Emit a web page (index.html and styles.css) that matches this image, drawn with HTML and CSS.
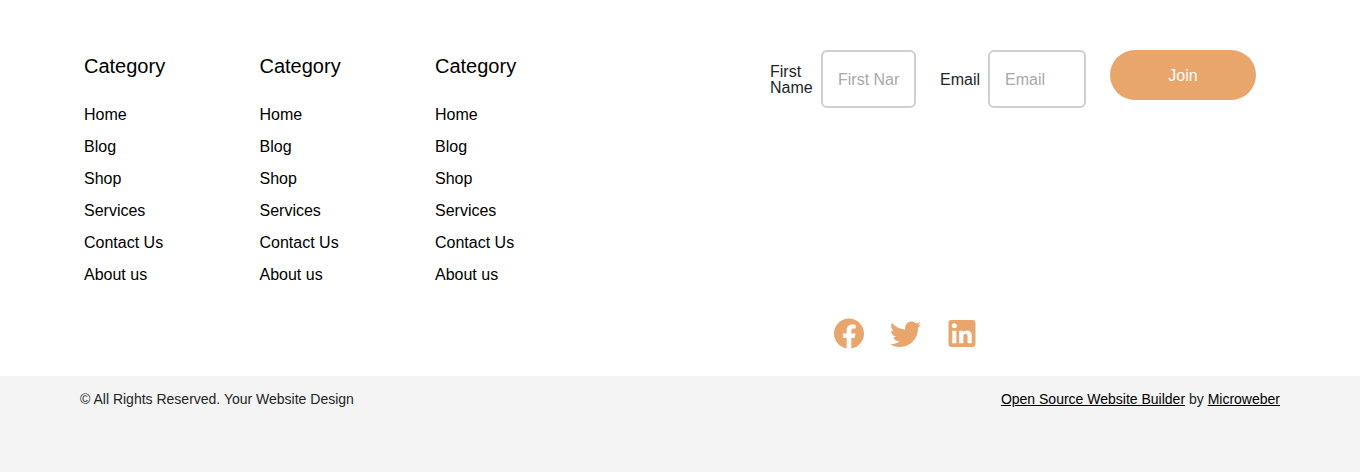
FILE: index.html
```html
<!DOCTYPE html>
<html lang="en">
<head>
<meta charset="utf-8">
<title>Your Website Design</title>
<link rel="stylesheet" href="styles.css">
</head>
<body>
<footer>
  <div class="main">
    <nav class="menus">
      <div class="menu">
        <h2>Category</h2>
        <ul>
          <li><a href="#">Home</a></li>
          <li><a href="#">Blog</a></li>
          <li><a href="#">Shop</a></li>
          <li><a href="#">Services</a></li>
          <li><a href="#">Contact Us</a></li>
          <li><a href="#">About us</a></li>
        </ul>
      </div>
      <div class="menu">
        <h2>Category</h2>
        <ul>
          <li><a href="#">Home</a></li>
          <li><a href="#">Blog</a></li>
          <li><a href="#">Shop</a></li>
          <li><a href="#">Services</a></li>
          <li><a href="#">Contact Us</a></li>
          <li><a href="#">About us</a></li>
        </ul>
      </div>
      <div class="menu">
        <h2>Category</h2>
        <ul>
          <li><a href="#">Home</a></li>
          <li><a href="#">Blog</a></li>
          <li><a href="#">Shop</a></li>
          <li><a href="#">Services</a></li>
          <li><a href="#">Contact Us</a></li>
          <li><a href="#">About us</a></li>
        </ul>
      </div>
    </nav>
    <div class="side">
      <form class="join">
        <div class="field field-name">
          <label for="first-name">First Name</label>
          <input id="first-name" type="text" placeholder="First Name">
        </div>
        <div class="field field-email">
          <label for="email">Email</label>
          <input id="email" type="email" placeholder="Email">
        </div>
        <button type="button">Join</button>
      </form>
      <div class="social">
        <a href="#" aria-label="Facebook"><svg viewBox="0 -0.333 24 24"><path d="M12 2.04C6.5 2.04 2 6.53 2 12.06C2 17.06 5.66 21.21 10.44 21.96V14.96H7.9V12.06H10.44V9.85C10.44 7.34 11.93 5.96 14.22 5.96C15.31 5.96 16.45 6.15 16.45 6.15V8.62H15.19C13.95 8.62 13.56 9.39 13.56 10.18V12.06H16.34L15.89 14.96H13.56V21.96A10 10 0 0 0 22 12.06C22 6.53 17.5 2.04 12 2.04Z"/></svg></a>
        <a href="#" aria-label="Twitter"><svg viewBox="0.333 -0.333 24 24"><path d="M22.46,6C21.69,6.35 20.86,6.58 20,6.69C20.88,6.16 21.56,5.32 21.88,4.31C21.05,4.81 20.13,5.16 19.16,5.36C18.37,4.5 17.26,4 16,4C13.65,4 11.73,5.92 11.73,8.29C11.73,8.63 11.77,8.96 11.84,9.27C8.28,9.09 5.11,7.38 3,4.79C2.63,5.42 2.42,6.16 2.42,6.94C2.42,8.43 3.17,9.75 4.33,10.5C3.62,10.5 2.96,10.3 2.38,10V10.03C2.38,12.11 3.86,13.85 5.82,14.24C5.46,14.34 5.08,14.39 4.69,14.39C4.42,14.39 4.15,14.36 3.89,14.31C4.43,16 6,17.26 7.89,17.29C6.43,18.45 4.58,19.13 2.56,19.13C2.22,19.13 1.88,19.11 1.54,19.07C3.44,20.29 5.7,21 8.12,21C16,21 20.33,14.46 20.33,8.79C20.33,8.6 20.33,8.42 20.32,8.23C21.16,7.63 21.88,6.87 22.46,6Z"/></svg></a>
        <a href="#" aria-label="LinkedIn"><svg viewBox="0 -0.333 24 24"><path d="M19 3A2 2 0 0 1 21 5V19A2 2 0 0 1 19 21H5A2 2 0 0 1 3 19V5A2 2 0 0 1 5 3H19M18.5 18.5V13.2A3.26 3.26 0 0 0 15.24 9.94C14.39 9.94 13.4 10.46 12.92 11.24V10.13H10.13V18.5H12.92V13.57C12.92 12.8 13.54 12.17 14.31 12.17A1.4 1.4 0 0 1 15.71 13.57V18.5H18.5M6.88 8.56A1.68 1.68 0 0 0 8.56 6.88C8.56 5.95 7.81 5.19 6.88 5.19A1.69 1.69 0 0 0 5.19 6.88C5.19 7.81 5.95 8.56 6.88 8.56M8.27 18.5V10.13H5.5V18.5H8.27Z"/></svg></a>
      </div>
    </div>
  </div>
  <div class="legal">
    <p>© All Rights Reserved. Your Website Design</p>
    <p><a href="#">Open Source Website Builder</a> by <a href="#">Microweber</a></p>
  </div>
</footer>
</body>
</html>
```

FILE: styles.css
```css
* {
  box-sizing: border-box;
}

body {
  margin: 0;
  background: #fff;
  color: #212529;
  font-family: "Liberation Sans", Arial, sans-serif;
  font-size: 16px;
}

.main {
  display: flex;
  justify-content: space-between;
  height: 376px;
  padding: 50px 104px 0 84px;
}

.menus {
  display: grid;
  grid-template-columns: repeat(3, 175.5px);
}

.menu h2 {
  margin: 0 0 17px;
  color: #000;
  font-size: 20px;
  font-weight: 400;
  line-height: 32px;
}

.menu ul {
  margin: 0;
  padding: 0;
  list-style: none;
}

.menu li {
  line-height: 32px;
}

.menu a {
  color: #000;
  text-decoration: none;
}

.side {
  width: 486px;
}

.join {
  display: flex;
  align-items: flex-start;
  gap: 24px;
  height: 265px;
}

.field {
  display: flex;
  align-items: center;
  gap: 8px;
  width: 146px;
}

.field label {
  flex: none;
  padding-top: 2px;
  line-height: 16px;
}

.field-name label {
  width: 43px;
}

.field input {
  flex: 1;
  min-width: 0;
  height: 58px;
  padding: 2px 15px 0;
  border: 2px solid #cfcfcf;
  border-radius: 6px;
  background: #fff;
  font: inherit;
}

.field input::placeholder {
  color: #a9a9a9;
  opacity: 1;
}

.join button {
  width: 146px;
  height: 50px;
  padding: 2px 0 0;
  border: 0;
  border-radius: 25px;
  background: #e8a56c;
  color: #fff;
  font: inherit;
}

.social {
  display: flex;
  gap: 20.5px;
  padding-left: 61px;
}

.social svg {
  display: block;
  width: 36px;
  height: 36px;
  fill: #e8a56c;
}

.legal {
  display: flex;
  justify-content: space-between;
  height: 96px;
  padding: 12px 80px 0;
  background: #f4f4f4;
  font-size: 14px;
  line-height: 22px;
}

.legal p {
  margin: 0;
}

.legal a {
  color: #000;
}
```
